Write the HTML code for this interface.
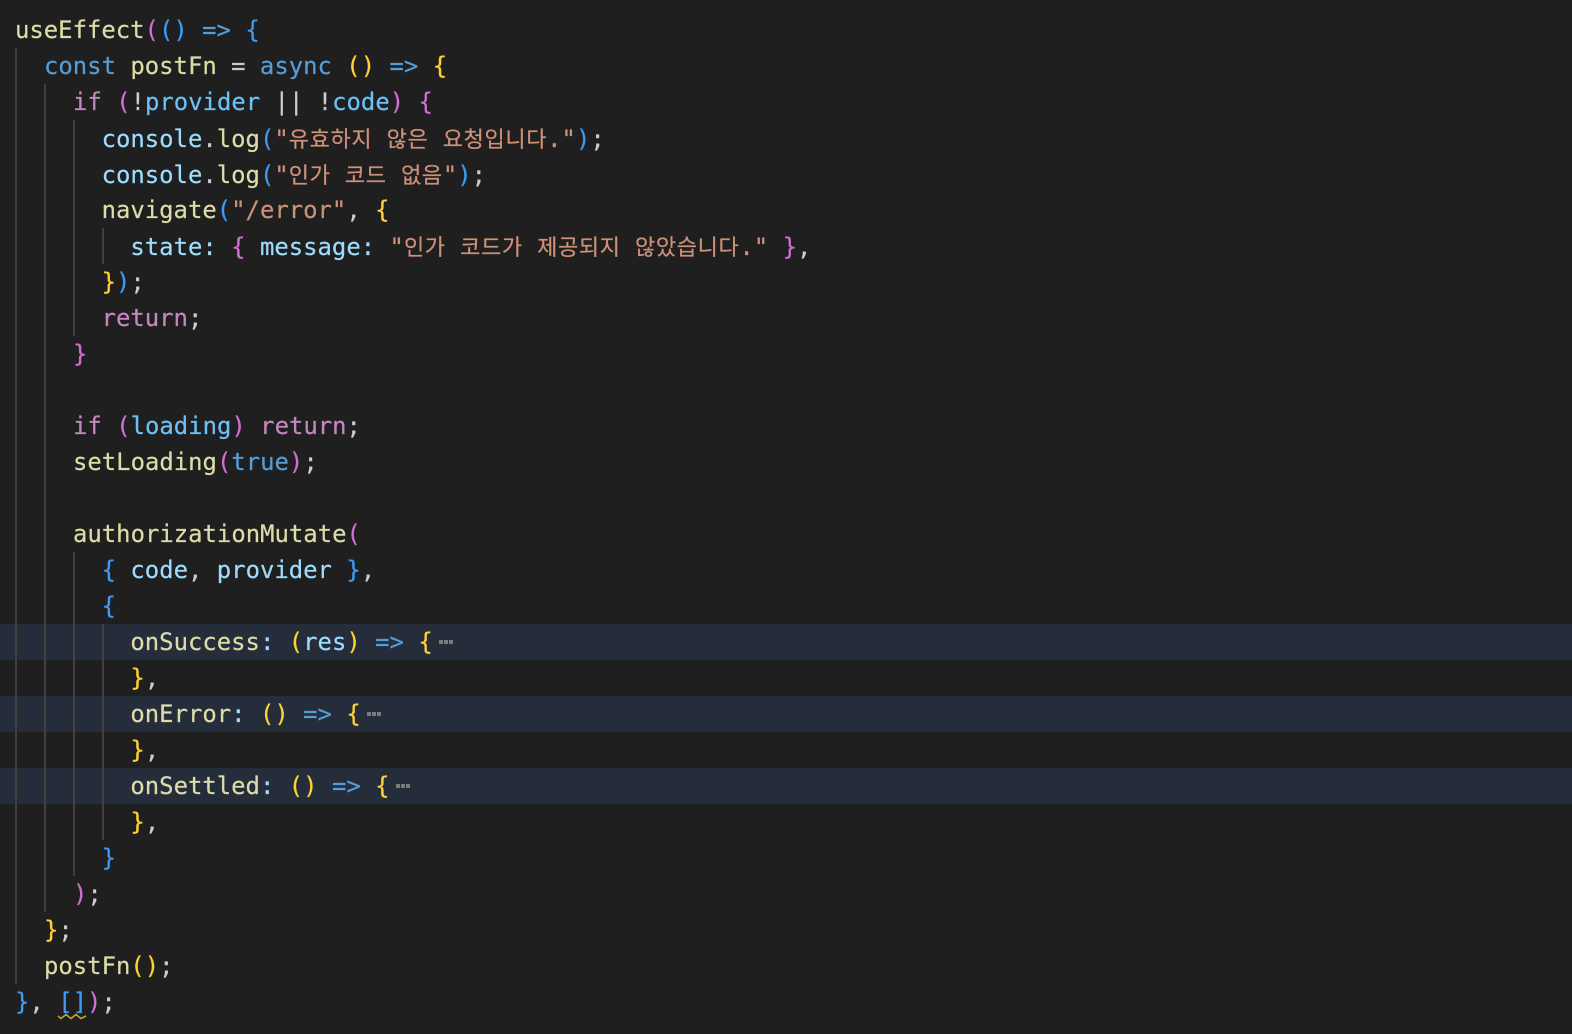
<!DOCTYPE html>
<html lang="ko">
<head>
<meta charset="utf-8">
<style>
html,body{margin:0;padding:0;width:1572px;height:1034px;overflow:hidden;background:#1f1f1f}
#e{position:relative;width:1572px;height:1034px;background:#1f1f1f;overflow:hidden;font-family:"DejaVu Sans Mono","Liberation Mono","Noto Sans CJK KR",monospace;font-size:23.92px;color:#cccccc;-webkit-text-stroke:0.2px}
.hl{position:absolute;left:0;width:1572px;height:36px;background:#252d3a}
.g{position:absolute;width:2px;background:#404040}
.l{position:absolute;left:0;height:36px;line-height:36px;white-space:pre}
.f{color:#dcdcaa}.k{color:#569cd6}.c{color:#c586c0}.v{color:#9cdcfe}.n{color:#6cc0f5}.s{color:#ce9178}
.y{color:#ffd133}.p{color:#d06fd0}.b{color:#3b9cf5}.o{color:#cfcfcf}
.h{font-family:"Noto Sans CJK KR",sans-serif;font-size:22px;letter-spacing:0.63px}
.d{position:absolute;width:14px;height:5px}
.d i{position:absolute;top:0;width:3.5px;height:4px;background:#7a7a7a}
</style>
</head>
<body>
<div id="e">
<div class="hl" style="top:624px"></div>
<div class="hl" style="top:696px"></div>
<div class="hl" style="top:768px"></div>

<div class="g" style="left:15px;top:48px;height:936px"></div>
<div class="g" style="left:44px;top:84px;height:828px"></div>
<div class="g" style="left:73px;top:120px;height:216px"></div>
<div class="g" style="left:73px;top:552px;height:324px"></div>
<div class="g" style="left:102px;top:228px;height:36px"></div>
<div class="g" style="left:102px;top:624px;height:216px"></div>

<div class="l" style="top:12px;left:15px"><span class="f">useEffect</span><span class="p">(</span><span class="b">()</span> <span class="k">=&gt;</span> <span class="b">{</span></div>
<div class="l" style="top:48px;left:44px"><span class="k">const</span> <span class="f">postFn</span> = <span class="k">async</span> <span class="y">()</span> <span class="k">=&gt;</span> <span class="y">{</span></div>
<div class="l" style="top:84px;left:73px"><span class="c">if</span> <span class="p">(</span>!<span class="n">provider</span> || !<span class="n">code</span><span class="p">)</span> <span class="p">{</span></div>
<div class="l" style="top:120px;left:101.6px"><span class="v">console</span>.<span class="f">log</span><span class="b">(</span><span class="s">"<span class="h">유효하지</span> <span class="h">않은</span> <span class="h">요청입니다</span>."</span><span class="b">)</span>;</div>
<div class="l" style="top:156px;left:101.6px"><span class="v">console</span>.<span class="f">log</span><span class="b">(</span><span class="s">"<span class="h">인가</span> <span class="h">코드</span> <span class="h">없음</span>"</span><span class="b">)</span>;</div>
<div class="l" style="top:192px;left:101.6px"><span class="f">navigate</span><span class="b">(</span><span class="s">"/error"</span>, <span class="y">{</span></div>
<div class="l" style="top:228px;left:130.4px"><span class="v">state:</span> <span class="p">{</span> <span class="v">message:</span> <span class="s">"<span class="h">인가</span> <span class="h">코드가</span> <span class="h">제공되지</span> <span class="h">않았습니다</span>."</span> <span class="p">}</span>,</div>
<div class="l" style="top:264px;left:101.6px"><span class="y">}</span><span class="b">)</span>;</div>
<div class="l" style="top:300px;left:101.6px"><span class="c">return</span>;</div>
<div class="l" style="top:336px;left:73px"><span class="p">}</span></div>

<div class="l" style="top:408px;left:73px"><span class="c">if</span> <span class="p">(</span><span class="n">loading</span><span class="p">)</span> <span class="c">return</span>;</div>
<div class="l" style="top:444px;left:73px"><span class="f">setLoading</span><span class="p">(</span><span class="k">true</span><span class="p">)</span>;</div>

<div class="l" style="top:516px;left:73px"><span class="f">authorizationMutate</span><span class="p">(</span></div>
<div class="l" style="top:552px;left:101.6px"><span class="b">{</span> <span class="v">code</span>, <span class="v">provider</span> <span class="b">}</span>,</div>
<div class="l" style="top:588px;left:101.6px"><span class="b">{</span></div>
<div class="l" style="top:624px;left:130.4px"><span class="f">onSuccess</span><span class="v">:</span> <span class="y">(</span><span class="v">res</span><span class="y">)</span> <span class="k">=&gt;</span> <span class="y">{</span></div>
<div class="l" style="top:660px;left:130.4px"><span class="y">}</span>,</div>
<div class="l" style="top:696px;left:130.4px"><span class="f">onError</span><span class="v">:</span> <span class="y">()</span> <span class="k">=&gt;</span> <span class="y">{</span></div>
<div class="l" style="top:732px;left:130.4px"><span class="y">}</span>,</div>
<div class="l" style="top:768px;left:130.4px"><span class="f">onSettled</span><span class="v">:</span> <span class="y">()</span> <span class="k">=&gt;</span> <span class="y">{</span></div>
<div class="l" style="top:804px;left:130.4px"><span class="y">}</span>,</div>
<div class="l" style="top:840px;left:101.6px"><span class="b">}</span></div>
<div class="l" style="top:876px;left:73px"><span class="p">)</span>;</div>
<div class="l" style="top:912px;left:44px"><span class="y">}</span>;</div>
<div class="l" style="top:948px;left:44px"><span class="f">postFn</span><span class="y">()</span>;</div>
<div class="l" style="top:984px;left:15px"><span class="b">}</span>, <span class="b">[]</span><span class="p">)</span>;</div>

<div class="d" style="left:439px;top:640px"><i style="left:0"></i><i style="left:5px"></i><i style="left:10px"></i></div>
<div class="d" style="left:367px;top:712px"><i style="left:0"></i><i style="left:5px"></i><i style="left:10px"></i></div>
<div class="d" style="left:396px;top:784px"><i style="left:0"></i><i style="left:5px"></i><i style="left:10px"></i></div>

<svg style="position:absolute;left:57px;top:1012px" width="30" height="8" viewBox="0 0 30 8">
<path d="M1 4 L4 6.5 L9 2.5 L14 6.5 L19 2.5 L24 6.5 L29 4" fill="none" stroke="#c9a02f" stroke-width="1.6"/>
</svg>
</div>
</body>
</html>
